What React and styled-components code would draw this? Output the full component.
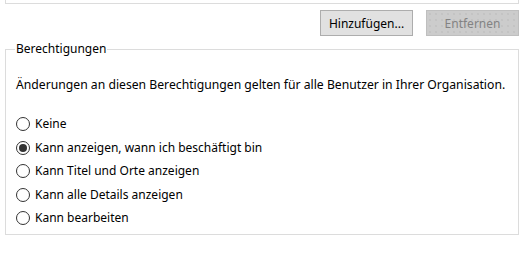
import React, { useState } from 'react';
import styled, { createGlobalStyle } from 'styled-components';

const GlobalStyle = createGlobalStyle`
	body {
		margin: 0;
		background: #fff;
		font-family: "Noto Sans", "Open Sans", sans-serif;
		font-size: 12px;
		color: #000;
	}
`

const Page = styled.div`
	padding: 0 4px 0 5px;
`

const ListBox = styled.div`
	height: 3px;
	border: 1px solid #dcdcdc;
	border-top: none;
`

const ButtonRow = styled.div`
	display: flex;
	justify-content: flex-end;
	gap: 13px;
	margin-top: 6px;
`

const Button = styled.button`
	width: 93px;
	height: 26px;
	font-family: inherit;
	font-size: 12px;
	border: 1px solid ${p => p.disabled ? '#bfbfbf' : '#adadad'};
	color: ${p => p.disabled ? '#838383' : '#000'};
	background-color: ${p => p.disabled ? '#cccccc' : '#e1e1e1'};
	background-image: ${p => p.disabled ? 'radial-gradient(#b8b8b8 0.6px, transparent 0.8px)' : 'none'};
	background-size: 6px 6px;
	padding: 0;
	border-radius: 0;
`

const Group = styled.fieldset`
	margin: 5px 0 0;
	padding: 0 9px 8px;
	border: 1px solid #dcdcdc;
	min-width: 0;
`

const Legend = styled.legend`
	padding: 0 1px;
	line-height: 16px;
`

const Note = styled.p`
	margin: 20px 0 0;
	padding-left: 1px;
	line-height: 16px;
	font-size: 12.2px;
`

const Options = styled.div`
	display: flex;
	flex-direction: column;
	gap: 7.5px;
	margin-top: 23px;
`

const Option = styled.label`
	display: flex;
	align-items: center;
	gap: 5px;
	line-height: 16px;
	cursor: default;
`

const Dot = styled.span`
	width: 14px;
	height: 14px;
	margin-left: 1px;
	border: 1px solid #333;
	border-radius: 50%;
	box-sizing: border-box;
	display: flex;
	align-items: center;
	justify-content: center;
	background: #fff;
	&::after {
		content: '';
		width: 8px;
		height: 8px;
		border-radius: 50%;
		background: ${p => p.checked ? '#333' : 'transparent'};
	}
`

const options = [
	'Keine',
	'Kann anzeigen, wann ich beschäftigt bin',
	'Kann Titel und Orte anzeigen',
	'Kann alle Details anzeigen',
	'Kann bearbeiten'
]

export default function App() {
	const [selected, setSelected] = useState(1);

	return (
		<Page>
			<GlobalStyle />
			<ListBox />
			<ButtonRow>
				<Button>Hinzufügen...</Button>
				<Button disabled>Entfernen</Button>
			</ButtonRow>
			<Group>
				<Legend>Berechtigungen</Legend>
				<Note>Änderungen an diesen Berechtigungen gelten für alle Benutzer in Ihrer Organisation.</Note>
				<Options>
					{options.map((text, i) => (
						<Option key={i} onClick={() => setSelected(i)}>
							<Dot checked={selected === i} />
							{text}
						</Option>
					))}
				</Options>
			</Group>
		</Page>
	)
}
